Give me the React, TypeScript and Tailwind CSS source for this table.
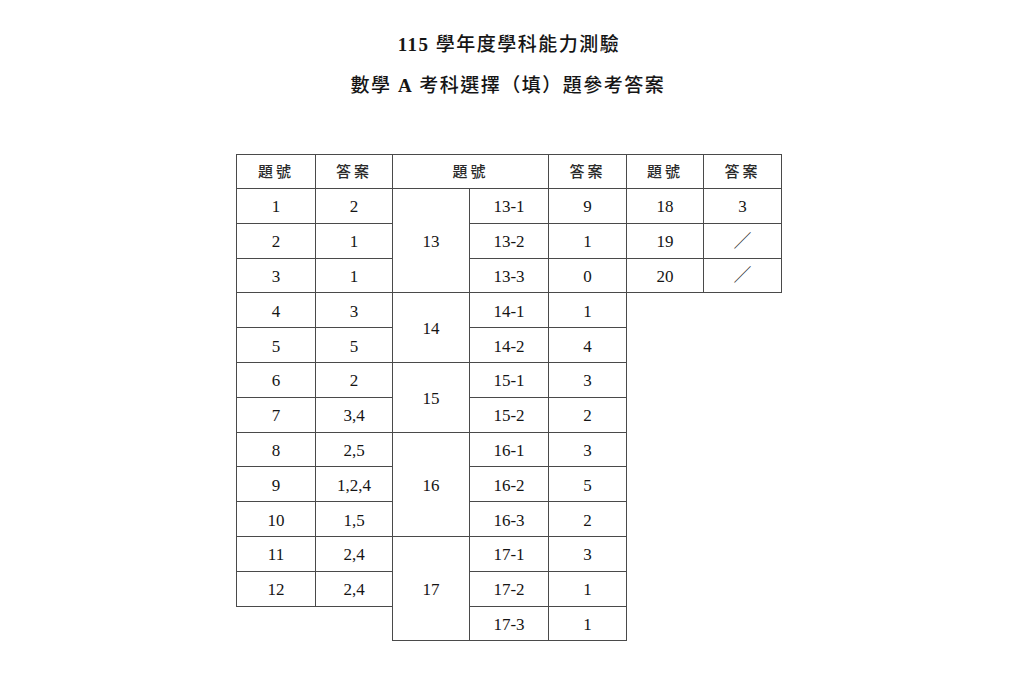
import React from "react";

const font = { fontFamily: '"Liberation Serif", "Noto Sans CJK TC", serif' };

type Cell = { t: string; rs?: number; cs?: number; empty?: boolean; cjk?: boolean };

const rows: Cell[][] = [
  [
    { t: "題號", cjk: true },
    { t: "答案", cjk: true },
    { t: "題號", cs: 2, cjk: true },
    { t: "答案", cjk: true },
    { t: "題號", cjk: true },
    { t: "答案", cjk: true },
  ],
  [{ t: "1" }, { t: "2" }, { t: "13", rs: 3 }, { t: "13-1" }, { t: "9" }, { t: "18" }, { t: "3" }],
  [{ t: "2" }, { t: "1" }, { t: "13-2" }, { t: "1" }, { t: "19" }, { t: "／", cjk: true }],
  [{ t: "3" }, { t: "1" }, { t: "13-3" }, { t: "0" }, { t: "20" }, { t: "／", cjk: true }],
  [{ t: "4" }, { t: "3" }, { t: "14", rs: 2 }, { t: "14-1" }, { t: "1" }],
  [{ t: "5" }, { t: "5" }, { t: "14-2" }, { t: "4" }],
  [{ t: "6" }, { t: "2" }, { t: "15", rs: 2 }, { t: "15-1" }, { t: "3" }],
  [{ t: "7" }, { t: "3,4" }, { t: "15-2" }, { t: "2" }],
  [{ t: "8" }, { t: "2,5" }, { t: "16", rs: 3 }, { t: "16-1" }, { t: "3" }],
  [{ t: "9" }, { t: "1,2,4" }, { t: "16-2" }, { t: "5" }],
  [{ t: "10" }, { t: "1,5" }, { t: "16-3" }, { t: "2" }],
  [{ t: "11" }, { t: "2,4" }, { t: "17", rs: 3 }, { t: "17-1" }, { t: "3" }],
  [{ t: "12" }, { t: "2,4" }, { t: "17-2" }, { t: "1" }],
  [{ t: "", cs: 2, empty: true }, { t: "17-3" }, { t: "1" }],
];

export default function App() {
  return (
    <div className="w-[1024px] h-[683px] bg-white text-[#151515] overflow-hidden" style={font}>
      <div className="flex flex-col items-center pt-[33px]">
        <div className="text-[19px] leading-[24px] tracking-[1.5px] font-medium pr-[6px]">
          <span className="font-bold">115</span> 學年度學科能力測驗
        </div>
        <div className="text-[19px] leading-[24px] tracking-[1.5px] font-medium mt-[17px] pr-[8px]">
          數學 <span className="font-bold">A</span> 考科選擇（填）題參考答案
        </div>
      </div>
      <div className="pl-[236px] pt-[56px]">
        <table className="table-fixed border-collapse w-[545px] text-[17px]">
          <colgroup>
            <col className="w-[79px]" />
            <col className="w-[77px]" />
            <col className="w-[77px]" />
            <col className="w-[79px]" />
            <col className="w-[78px]" />
            <col className="w-[77px]" />
            <col className="w-[78px]" />
          </colgroup>
          <tbody>
            {rows.map((r, i) => (
              <tr key={i} className={i === 0 ? "h-[34px]" : "h-[34.8px]"}>
                {r.map((c, j) =>
                  c.empty ? (
                    <td key={j} colSpan={c.cs} className="border-0 p-0" />
                  ) : (
                    <td
                      key={j}
                      rowSpan={c.rs}
                      colSpan={c.cs}
                      className={
                        "border border-[#4a4a4a] px-0 pb-0 text-center align-middle leading-[20px] " +
                        (c.cjk ? "pt-px text-[15px] tracking-[3px] font-medium text-[#2a2a2a]" : "pt-[3px]")
                      }
                    >
                      {c.t === "／" ? (
                        <span className="inline-block text-[18px] font-light tracking-normal">／</span>
                      ) : (
                        c.t
                      )}
                    </td>
                  )
                )}
              </tr>
            ))}
          </tbody>
        </table>
      </div>
    </div>
  );
}
